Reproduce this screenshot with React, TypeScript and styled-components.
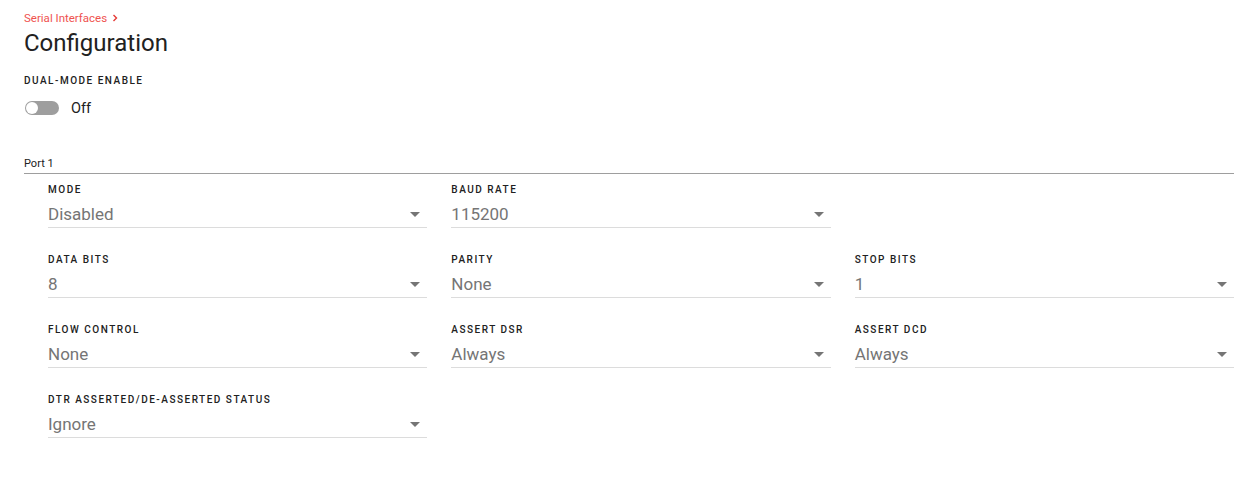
import styled, { createGlobalStyle } from 'styled-components';

const GlobalStyle = createGlobalStyle`
  body {
    margin: 0;
    background: #fff;
    font-family: Roboto, "Liberation Sans", sans-serif;
    color: #212121;
  }
`;

type Field = {
    label: string
    value: string
}

const rows: (Field | null)[][] = [
    [{label: 'Mode', value: 'Disabled'}, {label: 'Baud Rate', value: '115200'}, null],
    [{label: 'Data Bits', value: '8'}, {label: 'Parity', value: 'None'}, {label: 'Stop Bits', value: '1'}],
    [{label: 'Flow Control', value: 'None'}, {label: 'Assert DSR', value: 'Always'}, {label: 'Assert DCD', value: 'Always'}],
    [{label: 'DTR Asserted/De-Asserted Status', value: 'Ignore'}, null, null],
];

const Arrow = () => (
    <svg width="10" height="5" viewBox="0 0 10 5">
        <path d="M0 0 L10 0 L5 5 Z" fill="#757575"/>
    </svg>
);

const Chevron = () => (
    <svg width="8" height="8" viewBox="0 0 8 8">
        <path d="M2.5 1 L5.5 4 L2.5 7" stroke="#e53935" strokeWidth="1.4" fill="none"/>
    </svg>
);

export default function App() {
    return (
        <>
            <GlobalStyle/>
            <Page>
                <Breadcrumb>
                    <span>Serial Interfaces</span>
                    <Chevron/>
                </Breadcrumb>
                <Title>Configuration</Title>
                <Label $top={15}>Dual-Mode Enable</Label>
                <ToggleRow>
                    <Track>
                        <Thumb/>
                    </Track>
                    <ToggleText>Off</ToggleText>
                </ToggleRow>
                <Section>
                    <SectionTitle>Port 1</SectionTitle>
                    <Grid>
                        {rows.flat().map((f, i) => f ? (
                            <FieldBox key={i}>
                                <Label>{f.label}</Label>
                                <Select>
                                    <Value>{f.value}</Value>
                                    <Arrow/>
                                </Select>
                            </FieldBox>
                        ) : <div key={i}/>)}
                    </Grid>
                </Section>
            </Page>
        </>
    );
}

const Page = styled.div`
  padding: 11px 13px 0 24px;
`;

const Breadcrumb = styled.div`
  display: flex;
  align-items: center;
  gap: 4px;
  font-size: 11.5px;
  line-height: 14px;
  color: #ef5350;
`;

const Title = styled.h1`
  margin: 2px 0 0;
  font-size: 24px;
  font-weight: 400;
  line-height: 32px;
  color: #212121;
`;

const Label = styled.div<{ $top?: number }>`
  margin-top: ${p => p.$top ?? 0}px;
  font-size: 10px;
  font-weight: 500;
  line-height: 14px;
  letter-spacing: 1.5px;
  text-transform: uppercase;
  color: #212121;
`;

const ToggleRow = styled.div`
  display: flex;
  align-items: center;
  gap: 12px;
  height: 24px;
  margin-top: 8px;
  padding-left: 1px;
`;

const Track = styled.div`
  position: relative;
  width: 34px;
  height: 14px;
  border-radius: 7px;
  background: #9e9e9e;
`;

const Thumb = styled.div`
  position: absolute;
  left: 1px;
  top: 1px;
  width: 12px;
  height: 12px;
  border-radius: 50%;
  background: #fff;
`;

const ToggleText = styled.span`
  font-size: 14.5px;
  color: #212121;
`;

const Section = styled.section`
  margin-top: 37px;
`;

const SectionTitle = styled.div`
  font-size: 11px;
  line-height: 14px;
  padding-bottom: 2px;
  border-bottom: 1px solid #9e9e9e;
  color: #212121;
`;

const Grid = styled.div`
  display: grid;
  grid-template-columns: repeat(3, 1fr);
  column-gap: 24px;
  row-gap: 25px;
  padding-left: 24px;
  margin-top: 9px;
`;

const FieldBox = styled.div`
  display: flex;
  flex-direction: column;
`;

const Select = styled.div`
  display: flex;
  align-items: center;
  justify-content: space-between;
  height: 24px;
  padding: 5px 7px 1px 0;
  border-bottom: 1px solid #dcdcdc;
`;

const Value = styled.span`
  font-size: 17px;
  color: #757575;
`;
